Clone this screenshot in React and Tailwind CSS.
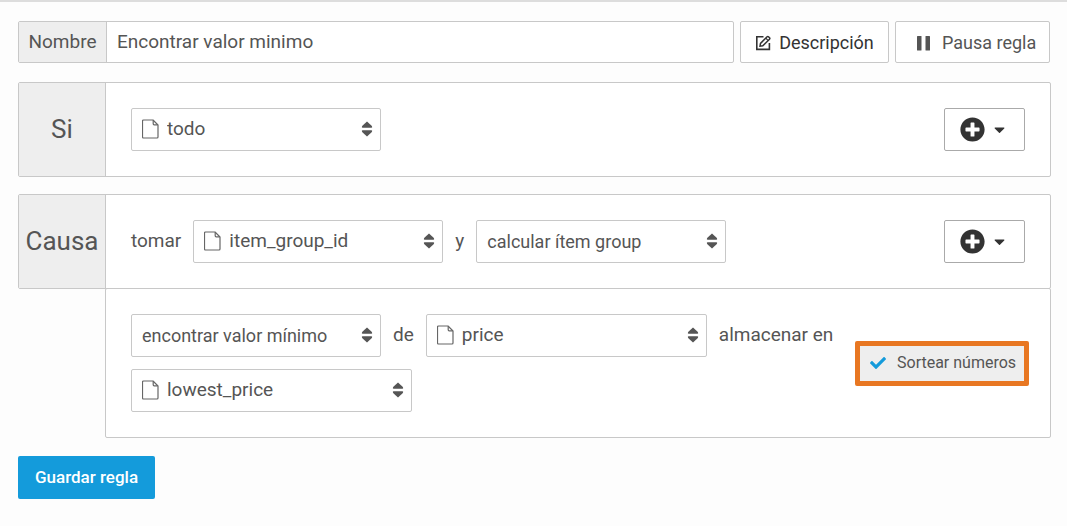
import { useState } from 'react'
import { FaCheck, FaPlusCircle, FaCaretDown } from 'react-icons/fa'

const FileIcon = () => (
  <svg viewBox="0 0 17 20" className="mb-px h-5 w-[17px]" fill="none" stroke="#666" strokeWidth="1.2" strokeLinejoin="round" aria-hidden="true">
    <path d="M1.5 1H11l5 5v12a1 1 0 0 1-1 1H1.5a1 1 0 0 1-1-1V2a1 1 0 0 1 1-1z" />
    <path d="M11.2 1.2v3.6a1 1 0 0 0 1 1h3.6" />
  </svg>
)

const EditIcon = () => (
  <svg viewBox="0 0 16 16" className="size-4" fill="none" stroke="#333" strokeWidth="1.6" aria-hidden="true">
    <path d="M8.5 1.8H1.8v12.6h12.6V8" />
    <path d="M5 11.2l.5-2.8 6.6-6.6a1 1 0 0 1 1.4 0l1 1a1 1 0 0 1 0 1.4L7.8 10.8z" strokeWidth="1.5" />
    <path d="M10.8 3.2l2.2 2.2" strokeWidth="1.2" />
  </svg>
)

const PauseIcon = () => (
  <svg viewBox="0 0 16 16" className="size-4" fill="#555" aria-hidden="true">
    <rect x="1" y="1" width="4.5" height="14.5" rx=".5" />
    <rect x="9.5" y="1" width="4.5" height="14.5" rx=".5" />
  </svg>
)

const SortIcon = () => (
  <svg viewBox="0 0 12 16" className="mb-px h-4 w-3" fill="#555" aria-hidden="true">
    <path d="M6 .5l4.9 4.6q.8 1.7-.4 1.7h-9q-1.2 0-.4-1.7z" />
    <path d="M6 15.5l4.9-4.6q.8-1.7-.4-1.7h-9q-1.2 0-.4 1.7z" />
  </svg>
)

const Field = ({ label, options, icon = false, wide = false }) => (
  <div className={`relative ${wide ? 'w-[281px]' : 'w-[250px]'}`}>
    <select
      aria-label={label}
      className={`h-[43px] w-full appearance-none rounded-xs border border-[#c8c8c8] bg-white pr-8 text-[#555] ${
        icon ? 'pl-[35px] text-[19px]' : 'pl-[10px] text-lg'
      }`}
    >
      {options.map((option) => (
        <option key={option}>{option}</option>
      ))}
    </select>
    {icon && (
      <span className="pointer-events-none absolute inset-y-0 left-[11px] flex items-center">
        <FileIcon />
      </span>
    )}
    <span className="pointer-events-none absolute inset-y-0 right-2 flex items-center">
      <SortIcon />
    </span>
  </div>
)

const AddButton = ({ label }) => (
  <button
    type="button"
    aria-label={label}
    className="flex h-[43px] w-[81px] shrink-0 items-center gap-[6px] rounded-xs border border-[#aaa] bg-white pl-[15px] text-[#333]"
  >
    <FaPlusCircle className="size-[25px]" />
    <FaCaretDown className="size-[17px]" />
  </button>
)

const RowTitle = ({ children }) => (
  <h2 className="flex w-[87px] shrink-0 items-center justify-center border-r border-[#c8c8c8] bg-[#eee] text-[26px]">
    {children}
  </h2>
)

const App = () => {
  const [name, setName] = useState('Encontrar valor minimo')
  const [sortNumbers, setSortNumbers] = useState(true)

  return (
    <main className="min-h-screen border-t-2 border-[#ddd] bg-[#fdfdfd] pt-[19px] pr-4 pb-6 pl-[18px] font-[Roboto,sans-serif] text-[19px] text-[#555]">
      {/* ── Rule name ── */}
      <div className="flex gap-[6px] pr-px">
        <div className="flex h-[42px] flex-1 rounded-xs border border-[#c8c8c8] bg-white">
          <label htmlFor="name" className="flex w-[88px] items-center justify-center border-r border-[#c8c8c8] bg-[#eee]">
            Nombre
          </label>
          <input
            id="name"
            value={name}
            onChange={(e) => setName(e.target.value)}
            className="min-w-0 flex-1 px-[10px] pt-px outline-none"
          />
        </div>
        <button type="button" className="flex h-[42px] w-[149px] items-center justify-center gap-2 rounded-xs border border-[#c8c8c8] bg-white pt-px text-lg text-[#333]">
          <EditIcon />
          Descripción
        </button>
        <button type="button" className="flex h-[42px] w-[155px] items-center gap-[10px] rounded-xs border border-[#c8c8c8] bg-white pt-px pl-5 text-lg">
          <PauseIcon />
          Pausa regla
        </button>
      </div>

      {/* ── Condition ── */}
      <section className="mt-[19px] flex rounded-xs border border-[#c8c8c8] bg-white">
        <RowTitle>Si</RowTitle>
        <div className="flex flex-1 items-center justify-between p-[25px]">
          <Field label="Condición" options={['todo']} icon />
          <AddButton label="Añadir condición" />
        </div>
      </section>

      {/* ── Action ── */}
      <section className="mt-[17px] flex rounded-xs border border-[#c8c8c8] bg-white">
        <RowTitle>Causa</RowTitle>
        <div className="flex flex-1 items-center justify-between p-[25px]">
          <div className="flex items-center gap-3">
            <span>tomar</span>
            <Field label="Campo" options={['item_group_id']} icon />
            <span>y</span>
            <Field label="Acción" options={['calcular ítem group']} />
          </div>
          <AddButton label="Añadir acción" />
        </div>
      </section>
      <section className="-mt-px ml-[87px] flex items-center rounded-xs border border-[#c8c8c8] bg-white py-[25px] pr-[21px] pl-[25px]">
        <div className="flex flex-1 flex-wrap items-center gap-3">
          <Field label="Cálculo" options={['encontrar valor mínimo']} />
          <span>de</span>
          <Field label="Campo de origen" options={['price']} icon wide />
          <span>almacenar en</span>
          <Field label="Campo de destino" options={['lowest_price']} icon wide />
        </div>
        <label className="flex h-[45px] w-[174px] shrink-0 items-center gap-[9px] rounded-xs border-5 border-[#e87722] bg-[#eee] pl-2 text-base">
          <span className="relative size-5">
            <input
              type="checkbox"
              checked={sortNumbers}
              onChange={(e) => setSortNumbers(e.target.checked)}
              className="block size-5 appearance-none"
            />
            {sortNumbers && (
              <FaCheck className="pointer-events-none absolute inset-0 m-auto size-4 text-[#149bdb]" />
            )}
          </span>
          Sortear números
        </label>
      </section>

      <button type="button" className="mt-[18px] h-[43px] w-[137px] rounded-xs bg-[#149bdb] text-[17px] font-medium text-white">
        Guardar regla
      </button>
    </main>
  )
}

export default App
